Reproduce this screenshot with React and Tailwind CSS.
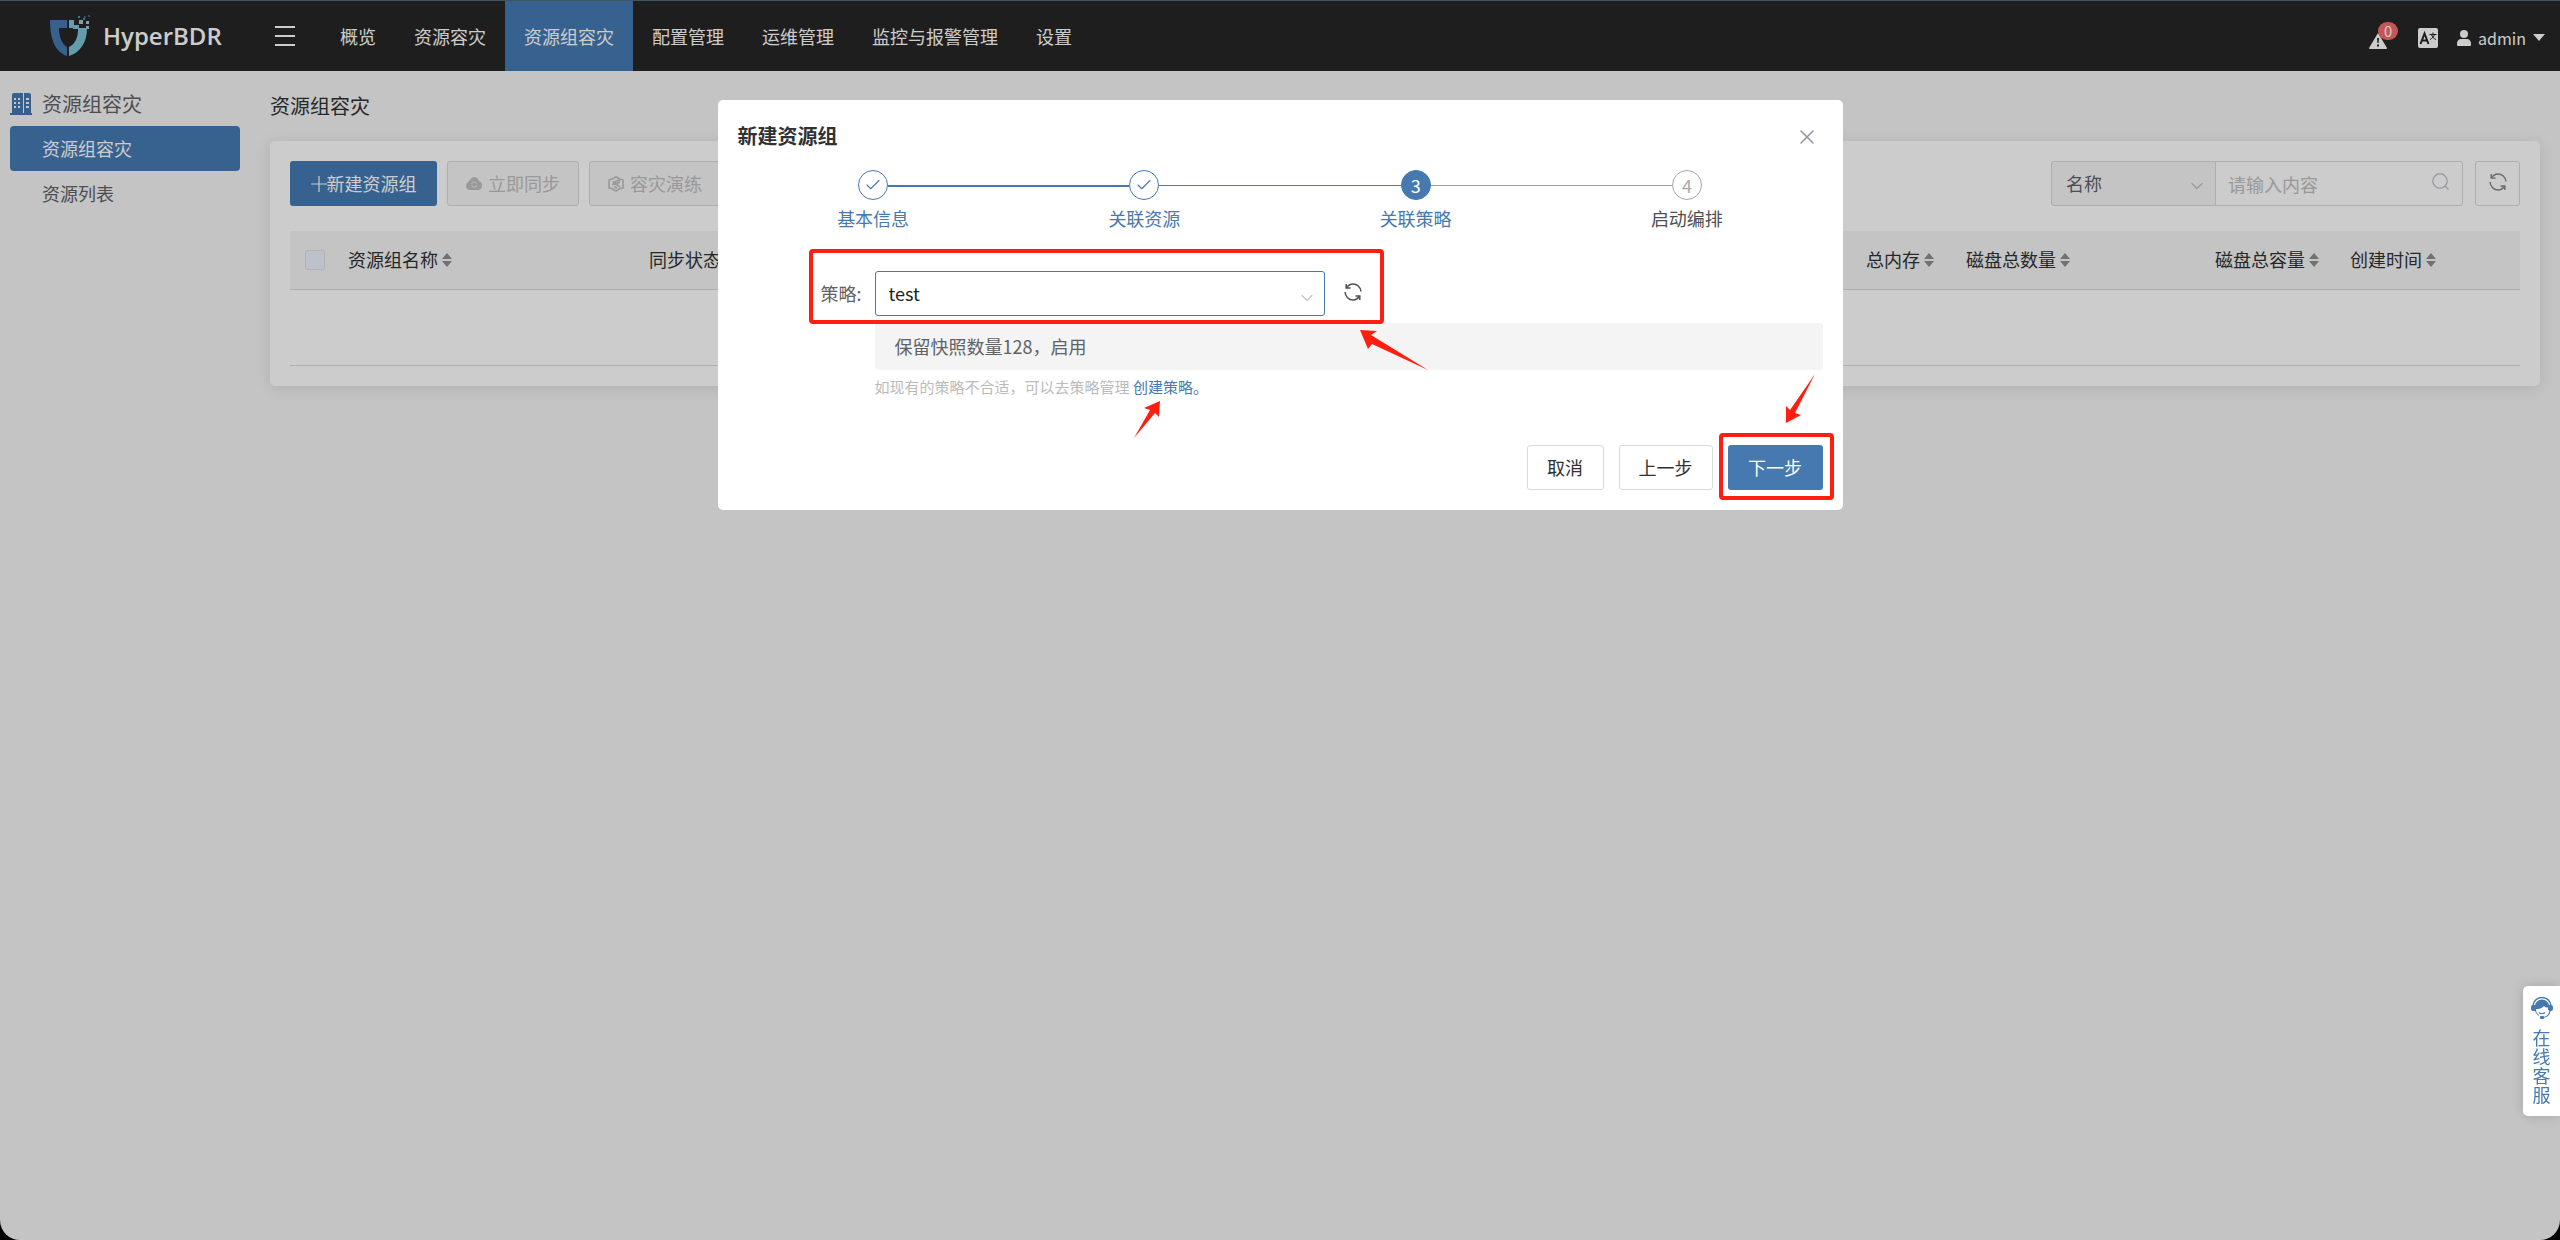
import React, { useState } from 'react';
import { Check, ChevronDown, X } from 'lucide-react';

const navItems = ['概览', '资源容灾', '资源组容灾', '配置管理', '运维管理', '监控与报警管理', '设置'];

const sideItems = ['资源组容灾', '资源列表'];

const columns = [
    { label: '资源组名称', width: 'w-[301px]', sortable: true },
    { label: '同步状态', width: '', sortable: false },
    { label: '总内存', width: 'w-[100px]', sortable: true },
    { label: '磁盘总数量', width: 'w-[249px]', sortable: true },
    { label: '磁盘总容量', width: 'w-[135px]', sortable: true },
    { label: '创建时间', width: 'w-[185px]', sortable: true },
];

const steps = [
    { label: '基本信息', state: 'done', before: 'invisible', after: 'mt-[2px] h-[2px] bg-[#4579b0]' },
    { label: '关联资源', state: 'done', before: 'mt-[2px] h-[2px] bg-[#4579b0]', after: 'mt-px h-px bg-[#4579b0]' },
    { label: '关联策略', state: 'active', before: 'mt-px h-px bg-[#4579b0]', after: 'mt-px h-px bg-[#a0a0a0]' },
    { label: '启动编排', state: 'wait', before: 'mt-px h-px bg-[#a0a0a0]', after: 'invisible' },
];

function Logo() {
    return (
        <svg viewBox="0 0 42 42" className="w-[42px] h-[42px]" aria-hidden="true">
            <path d="M1 5h17v8h-8c0 9 3 16 8 19v9C7 37 1 26 1 5z" fill="#4579b0" />
            <path d="M20 5h5v5h5v3h8C38 27 32 37 20 41v-9c6-3 9-9 9-18h-5v-1h-4z" fill="#7cc5d6" />
            <path d="M30 5h4v4h-4zM37 6h3v3h-3zM37 11h3v3h-3z" fill="#a9c3d4" />
            <path d="M34 3h2v2h-2zM29 1h2v2h-2z" fill="#5d8db5" />
            <path d="M39 0h2v2h-2zM35 1h2v2h-2z" fill="#3f5f80" />
        </svg>
    );
}

function Building() {
    return (
        <svg viewBox="0 0 22 22" className="w-[22px] h-[22px]" aria-hidden="true">
            <path d="M2 2a2 2 0 0 1 2-2h9v20h1V0h5a2 2 0 0 1 2 2v18h1v2H0v-2h2z" fill="#4579b0" />
            <path d="M4 5h2v2H4zm4 0h2v2H8zm8 0h3v2h-3zM4 9h2v2H4zm4 0h2v2H8zm8 0h3v2h-3zM4 13h2v2H4zm4 0h2v2H8zm8 0h3v2h-3z" fill="#f5f5f5" />
        </svg>
    );
}

function Refresh() {
    return (
        <svg viewBox="0 0 18 18" className="h-[18px] w-[18px]" fill="none" stroke="currentColor" strokeWidth="1.5" aria-hidden="true">
            <path d="M2.5 5C4 2.500 6.500 1 9 1c4 0 7.500 3 8 7.500" />
            <path d="M1 9c.3 4.500 4 8 8 8 2.500 0 5-1.500 6.500-4" />
            <path d="M2.200 1v4h4.300M15.800 17v-4h-4.300" />
        </svg>
    );
}

function Sort() {
    return (
        <svg viewBox="0 0 10 14" className="w-[10px] h-[14px]" fill="#8e8e8e" aria-hidden="true">
            <path d="M5 0l5 6H0zM5 14l5-6H0z" />
        </svg>
    );
}

function CloudSync() {
    return (
        <svg viewBox="0 0 16 13" className="w-[16px] h-[13px]" aria-hidden="true">
            <path d="M4 3.500C4.800 1.300 6.300 0 8.200 0c2.600 0 4.300 1.700 4.800 4 1.800.6 3 2.200 3 4.500C16 11.300 14.300 13 12 13H3.700C1.500 13 0 11.300 0 9c0-2 1-3 2-3.500C2 4.500 3 3.500 4 3.500z" fill="currentColor" />
            <path d="M5.500 7a2.600 2.600 0 0 1 5-.4M10.700 8a2.600 2.600 0 0 1-5 .5" stroke="#f5f5f5" strokeWidth=".8" fill="none" />
        </svg>
    );
}

function Drill() {
    return (
        <svg viewBox="0 0 16 16" className="w-[16px] h-[16px]" fill="none" stroke="currentColor" strokeWidth="1.600" aria-hidden="true">
            <path d="M4 3L8 1l4 2M4 3L1 4v8l3 .5M12 3l3 1v8l-3 .5M4 12.500L8 15l4-2.500M12 4L6 6l3 1.500L12 6M6 6L5 8.500 8 8l4 3M6 10.500l3 1.500" />
        </svg>
    );
}

function Headset() {
    return (
        <svg viewBox="0 0 22 22" className="w-[22px] h-[22px]" aria-hidden="true">
            <path d="M19 14a8 8 0 0 1-7 6.500" fill="none" stroke="#4579b0" strokeWidth="1.200" />
            <path d="M2 9a9 8.500 0 0 1 18 0" fill="none" stroke="#4579b0" strokeWidth="1.500" />
            <path d="M4 9a7 6.500 0 0 1 14 0v4h-1V10.500c-2 0-3-.5-4-1.500C11 11.500 8 12 5 12v2H4z" fill="#4579b0" />
            <path d="M0 10a2 2 0 0 1 2-2h2v6H2a2 2 0 0 1-2-2zM18 8h2a2 2 0 0 1 2 2v2a2 2 0 0 1-2 2h-2z" fill="#4579b0" />
            <path d="M8 15.500q3 2.500 6 0" fill="none" stroke="#4579b0" strokeWidth="1.200" />
            <path d="M4.500 14q1 3 3.500 4.500" fill="none" stroke="#4579b0" />
            <rect x="9" y="19" width="4" height="3" rx="1" fill="#4579b0" />
        </svg>
    );
}

function Header() {
    return (
        <header className="flex h-[71px] shrink-0 items-stretch border-t border-[#4e6c76] bg-[#262626] text-white">
            <a href="#home" className="flex w-[275px] items-center gap-3 pl-[49px]">
                <Logo />
                <span className="font-['Open_Sans',sans-serif] text-2xl font-semibold">HyperBDR</span>
            </a>
            <button type="button" aria-label="菜单" className="mr-[26px] flex w-5 flex-col items-stretch justify-center gap-[7px]">
                <span className="h-[2px] bg-white" />
                <span className="h-[2px] bg-white" />
                <span className="h-[2px] bg-white" />
            </button>
            <nav className="flex flex-1">
                {navItems.map((item) => (
                    <a
                        key={item}
                        href="#nav"
                        className={`flex items-center px-[19px] ${item === '资源组容灾' ? 'bg-[#457bb3]' : ''}`}
                    >
                        {item}
                    </a>
                ))}
            </nav>
            <div className="flex items-center pt-[3px] pr-[15px]">
                <button type="button" aria-label="报警" className="relative mr-[31px]">
                    <svg viewBox="0 0 18 16" className="mt-[6px] h-[16px] w-[18px]">
                        <path d="M9 0l9 15q0 1-1 1H1q-1 0-1-1z" fill="#fff" />
                        <path d="M8 5h2l-.4 5H8.400zM8 11.500h2v2H8z" fill="#262626" />
                    </svg>
                    <span className="absolute -top-[5px] left-[9px] flex h-[18px] w-5 items-center justify-center rounded-full bg-[#f56c6c] text-[15px]">
                        0
                    </span>
                </button>
                <button type="button" aria-label="语言" className="mr-[19px]">
                    <svg viewBox="0 0 20 20" className="h-5 w-5">
                        <rect width="20" height="20" rx="2" fill="#fff" />
                        <path d="M2.500 16L6.500 5.500 10.500 16M4 12.500h5" stroke="#262626" strokeWidth="2" fill="none" />
                        <path d="M11.500 6.500h7M15 4.500v2M12 11.500c2-1 4-3 4.500-5M13.500 6.500c.5 2 2 4 4.500 5" stroke="#262626" fill="none" />
                    </svg>
                </button>
                <button type="button" className="flex items-center">
                    <svg viewBox="0 0 14 16" className="mr-[7px] h-[16px] w-[14px]" fill="#fff" aria-hidden="true">
                        <circle cx="7" cy="4" r="4" />
                        <path d="M0 14c0-3.500 2-5 4-5h6c2 0 4 1.500 4 5v1q0 1-1 1H1q-1 0-1-1z" />
                    </svg>
                    <span className="text-base">admin</span>
                    <svg viewBox="0 0 12 7" className="ml-[7px] h-[7px] w-[12px]" fill="#fff" aria-hidden="true">
                        <path d="M0 0h12L6 7z" />
                    </svg>
                </button>
            </div>
        </header>
    );
}

function Sidebar() {
    return (
        <aside className="w-[230px] shrink-0 pt-[13px]">
            <h2 className="mb-[2px] flex h-10 items-center gap-[10px] text-xl text-[#606266]">
                <Building />
                资源组容灾
            </h2>
            <ul>
                {sideItems.map((item) => (
                    <li key={item}>
                        <a
                            href="#side"
                            className={`flex h-[45px] items-center rounded-[4px] pl-8 ${item === '资源组容灾' ? 'bg-[#457bb3] text-white' : 'text-[#606266]'}`}
                        >
                            {item}
                        </a>
                    </li>
                ))}
            </ul>
        </aside>
    );
}

function Toolbar() {
    const [keyword, setKeyword] = useState('');

    return (
        <div className="flex justify-between">
            <div className="flex gap-[10px]">
                <button type="button" className="flex h-[45px] w-[147px] items-center justify-center rounded-[3px] bg-[#457bb3] text-white">
                    <svg viewBox="0 0 16 16" className="h-[16px] w-[16px]" stroke="currentColor" strokeWidth="1.200" aria-hidden="true">
                        <path d="M8 0v16M0 8h16" />
                    </svg>
                    新建资源组
                </button>
                <button type="button" disabled className="flex h-[45px] w-[132px] items-center justify-center gap-[6px] rounded-[3px] border border-[#dadada] bg-[#f5f5f5] text-[#c0c0c0]">
                    <CloudSync />
                    立即同步
                </button>
                <button type="button" disabled className="flex h-[45px] w-[132px] items-center justify-center gap-[6px] rounded-[3px] border border-[#dadada] bg-[#f5f5f5] text-[#c0c0c0]">
                    <Drill />
                    容灾演练
                </button>
            </div>
            <div className="flex">
                <div className="relative w-[165px]">
                    <select aria-label="搜索字段" className="h-[45px] w-full appearance-none rounded-l-[3px] border border-[#dadada] bg-[#f5f5f5] px-[14px] text-[#606266]">
                        <option>名称</option>
                    </select>
                    <ChevronDown className="pointer-events-none absolute top-[15px] right-[9px] h-5 w-5 text-[#c0c4cc]" strokeWidth={1.5} />
                </div>
                <div className="relative mr-3 w-[247px]">
                    <input
                        type="text"
                        aria-label="搜索内容"
                        placeholder="请输入内容"
                        value={keyword}
                        onChange={(e) => setKeyword(e.target.value)}
                        className="h-[45px] w-full rounded-r-[3px] border border-l-0 border-[#dadada] bg-white px-3 placeholder:text-[#c0c0c0]"
                    />
                    <svg viewBox="0 0 17 17" className="absolute top-3 right-[14px] h-[17px] w-[17px]" fill="none" stroke="#c0c4cc" strokeWidth="1.400" aria-hidden="true">
                        <circle cx="8" cy="8" r="7.200" />
                        <path d="M13 13l3.500 3.500" />
                    </svg>
                </div>
                <button type="button" aria-label="刷新" className="flex h-[45px] w-[45px] items-center justify-center rounded-[3px] border border-[#dadada] bg-white pb-[3px] text-[#8a8a8a]">
                    <Refresh />
                </button>
            </div>
        </div>
    );
}

function GroupTable() {
    return (
        <table className="mt-[25px] w-full table-fixed border-collapse text-left text-[#303133]">
            <thead>
                <tr className="h-[58px] border-b border-[#dadada] bg-[#f5f5f5]">
                    <th className="w-[43px] pl-[15px]">
                        <input type="checkbox" aria-label="全选" disabled className="block h-5 w-5 appearance-none rounded-[3px] border border-[#dcdfe6] bg-[#edf2fc]" />
                    </th>
                    {columns.map((col) => (
                        <th key={col.label} className={`px-[15px] font-normal whitespace-nowrap ${col.width}`}>
                            <span className="flex items-center gap-1">
                                {col.label}
                                {col.sortable && <Sort />}
                            </span>
                        </th>
                    ))}
                </tr>
            </thead>
            <tbody>
                <tr className="h-[76px] border-b border-[#dadada]">
                    <td colSpan={7} />
                </tr>
            </tbody>
        </table>
    );
}

function Steps() {
    return (
        <ol className="mt-[14px] grid grid-cols-4">
            {steps.map((step, i) => (
                <li key={step.label} className="flex flex-col items-center">
                    <div className="flex w-full items-center">
                        <span className={`flex-1 ${step.before}`} />
                        <span
                            className={`
                                flex h-[30px] w-[30px] items-center justify-center rounded-full border
                                ${step.state === 'done' ? 'border-[#4579b0] text-[#4579b0]' : ''}
                                ${step.state === 'active' ? 'border-[#4579b0] bg-[#4579b0] text-white' : ''}
                                ${step.state === 'wait' ? 'border-[#a8a8a8] text-[#a8a8a8]' : ''}
                            `}
                        >
                            {step.state === 'done' ? <Check className="h-[18px] w-[18px]" strokeWidth={1.5} /> : i + 1}
                        </span>
                        <span className={`flex-1 ${step.after}`} />
                    </div>
                    <span className={`mt-[5px] ${step.state === 'wait' ? 'text-[#505050]' : 'text-[#4579b0]'}`}>
                        {step.label}
                    </span>
                </li>
            ))}
        </ol>
    );
}

function Dialog() {
    return (
        <div className="fixed inset-0 flex items-start justify-center bg-black/20 pt-[100px]">
            <section role="dialog" aria-label="新建资源组" className="w-[1125px] rounded-[5px] bg-white p-5">
                <div className="flex h-9 items-start justify-between">
                    <h1 className="text-xl leading-8 font-bold text-[#303133]">新建资源组</h1>
                    <button type="button" aria-label="关闭" className="mt-[5px] mr-1 text-[#909399]">
                        <X className="h-6 w-6" strokeWidth={1.5} />
                    </button>
                </div>

                <Steps />

                {/* Policy */}
                <div className="mt-[39px] flex">
                    <div className="relative flex items-center pl-[83px]">
                        <label htmlFor="policy" className="w-[54px] text-[#606266]">策略:</label>
                        <select id="policy" className="h-[45px] w-[450px] appearance-none rounded-[3px] border border-[#4579b0] bg-white px-[13px] text-[#222]">
                            <option>test</option>
                        </select>
                        <ChevronDown className="pointer-events-none -ml-[28px] mt-2 h-5 w-5 text-[#c0c4cc]" strokeWidth={1.5} />
                        <button type="button" aria-label="刷新策略" className="ml-[27px] pb-1 text-[#505050]">
                            <Refresh />
                        </button>
                        <div className="pointer-events-none absolute -top-[22px] -right-[22px] -bottom-2 left-[71px] rounded-[4px] border-4 border-[#ff1f10]" />
                        <svg viewBox="0 0 68 40" className="pointer-events-none absolute top-[59px] -right-[66px] h-[40px] w-[68px]" fill="#ff1f10" aria-hidden="true">
                            <path d="M0 0l17 1-6 4 57 35L12 14l-4 5z" />
                        </svg>
                    </div>
                </div>

                <div className="mt-[7px] ml-[137px]">
                    <p className="flex h-[47px] items-center rounded-[3px] bg-[#f4f4f4] px-5 text-[#606266]">
                        保留快照数量128，启用
                    </p>
                    <p className="mt-[5px] text-[15px] leading-6 text-[#bbb]">
                        如现有的策略不合适，可以去策略管理{' '}
                        <a href="#policy" className="relative text-[#4579b0]">
                            创建策略。
                            <svg viewBox="0 0 26 37" className="pointer-events-none absolute top-[25px] left-px h-[37px] w-[26px]" fill="#ff1f10" aria-hidden="true">
                                <path d="M26 0l-1 16-4-4L0 37 16 9l-6-2z" />
                            </svg>
                        </a>
                    </p>
                </div>

                {/* Footer */}
                <div className="mt-[46px] flex justify-end gap-[15px] text-[#303133]">
                    <button type="button" className="h-[45px] w-[77px] rounded-[3px] border border-[#dadada]">取消</button>
                    <button type="button" className="h-[45px] w-[94px] rounded-[3px] border border-[#dadada]">上一步</button>
                    <div className="relative">
                        <button type="button" className="h-[45px] w-[95px] rounded-[3px] bg-[#4579b0] text-white">下一步</button>
                        <div className="pointer-events-none absolute -top-3 -right-[11px] -bottom-[10px] -left-[9px] rounded-[4px] border-4 border-[#ff1f10]" />
                        <svg viewBox="0 0 29 49" className="pointer-events-none absolute -top-[71px] right-2 h-[49px] w-[29px]" fill="#ff1f10" aria-hidden="true">
                            <path d="M29 0L9 39l6 2L0 49V32l4 4z" />
                        </svg>
                    </div>
                </div>
            </section>
        </div>
    );
}

export default function App() {
    return (
        <div className="bg-black font-['Noto_Sans_CJK_SC',sans-serif] text-lg leading-[27px]">
            <div className="flex min-h-screen flex-col overflow-hidden rounded-b-[20px] bg-[#f5f5f5]">
                <Header />
                <div className="flex flex-1 gap-[30px] pr-5 pl-[10px]">
                    <Sidebar />
                    <main className="min-w-0 flex-1">
                        <h2 className="flex h-[70px] items-center text-xl text-[#303133]">资源组容灾</h2>
                        <div className="rounded-[5px] bg-white p-5 shadow-[0_2px_15px_rgba(0,0,0,0.1)]">
                            <Toolbar />
                            <GroupTable />
                        </div>
                    </main>
                </div>
            </div>

            <Dialog />

            {/* Online service */}
            <button type="button" className="fixed right-0 bottom-[124px] flex w-[37px] flex-col items-center gap-[9px] rounded-l-[5px] bg-white pt-[11px] pb-3 leading-[19px] text-[#4579b0] shadow-[0_0_12px_rgba(0,0,0,0.15)]">
                <Headset />
                <span className="w-[18px]">在线客服</span>
            </button>
        </div>
    );
}
